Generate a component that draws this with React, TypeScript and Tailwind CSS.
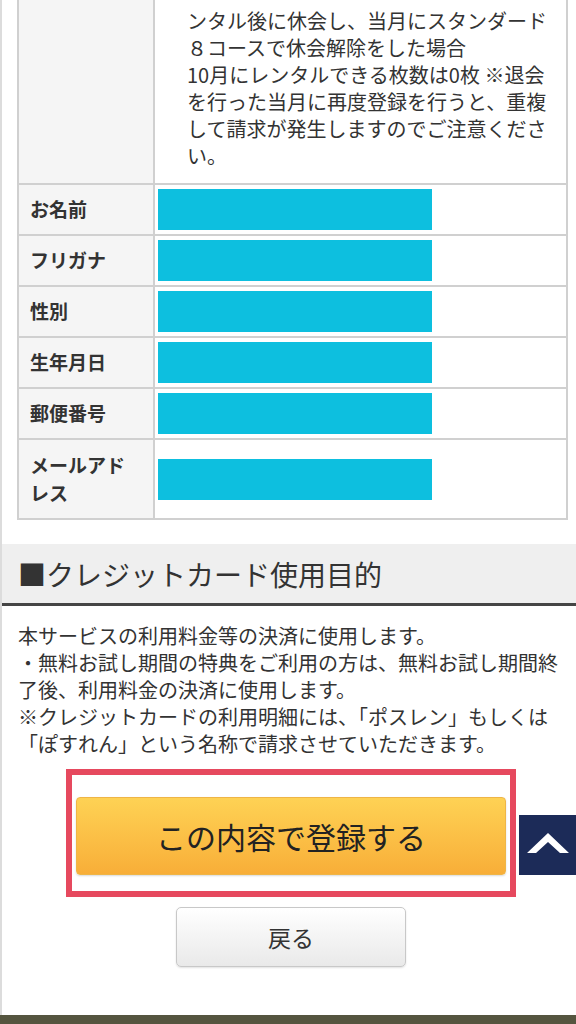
const rows = [
  { label: ["お名前"] },
  { label: ["フリガナ"] },
  { label: ["性別"] },
  { label: ["生年月日"] },
  { label: ["郵便番号"] },
  { label: ["メールアド", "レス"] },
];

const noteLines = [
  "ンタル後に休会し、当月にスタンダード",
  "８コースで休会解除をした場合",
  "10月にレンタルできる枚数は0枚 ※退会",
  "を行った当月に再度登録を行うと、重複",
  "して請求が発生しますのでご注意くださ",
  "い。",
];

const purposeLines = [
  "本サービスの利用料金等の決済に使用します。",
  "・無料お試し期間の特典をご利用の方は、無料お試し期間終",
  "了後、利用料金の決済に使用します。",
  "※クレジットカードの利用明細には、「ポスレン」もしくは",
  "「ぽすれん」という名称で請求させていただきます。",
];

const App = () => {
  return (
    <div className="w-[576px] h-[1024px] bg-white overflow-hidden flex flex-col text-[#333] font-['Noto_Sans_CJK_JP','Noto_Sans',sans-serif]">
      <div className="flex-1 border-l-2 border-[#dcdcdc] flex flex-col">
        {/* confirm table */}
        <div className="ml-[15px] w-[551px] border-x-2 border-b-2 border-[#d0d0d0]">
          <div className="flex border-b-2 border-[#d0d0d0]">
            <div className="w-[136px] shrink-0 bg-[#f5f5f5] border-r-2 border-[#d0d0d0]" />
            <div className="flex-1 pl-[32px] pt-[7px] pb-[14px] text-[20px] leading-[27px] whitespace-nowrap">
              {noteLines.map((line) => (
                <div key={line}>{line}</div>
              ))}
            </div>
          </div>

          {rows.map((row, i) => (
            <div
              key={row.label[0]}
              className={
                i === rows.length - 1
                  ? "flex"
                  : "flex border-b-2 border-[#d0d0d0]"
              }
            >
              <div
                className={
                  row.label.length > 1
                    ? "w-[136px] shrink-0 bg-[#f5f5f5] border-r-2 border-[#d0d0d0] pl-[11px] py-[11px] text-[19px] leading-[28px] font-bold whitespace-nowrap"
                    : "w-[136px] shrink-0 bg-[#f5f5f5] border-r-2 border-[#d0d0d0] pl-[11px] h-[49px] flex items-center text-[19px] font-bold whitespace-nowrap"
                }
              >
                <div>
                  {row.label.map((l) => (
                    <div key={l}>{l}</div>
                  ))}
                </div>
              </div>
              <div className="flex-1 flex items-center pl-[3px]">
                <div className="w-[274px] h-[41px] bg-[#0dbfdf]" />
              </div>
            </div>
          ))}
        </div>

        {/* section header */}
        <div className="mt-[24px] h-[62px] bg-[#efefef] border-b-[3px] border-[#454545] flex items-center pl-[16px] text-[28px] text-[#333]">
          ■クレジットカード使用目的
        </div>

        <div className="px-[16px] pt-[16px] text-[20px] leading-[27px] whitespace-nowrap">
          {purposeLines.map((line) => (
            <div key={line}>{line}</div>
          ))}
        </div>

        {/* buttons */}
        <div className="relative mt-[12px] flex flex-col items-center pl-[4px]">
          <div className="w-[450px] border-[6px] border-[#e6495e] pt-[22px] pb-[16px] px-[4px]">
            <button className="w-full h-[78px] rounded-[4px] border border-[#efb547] bg-gradient-to-b from-[#fed254] to-[#f8ae38] text-[30px] text-[#222] shadow-[0_1px_2px_rgba(0,0,0,0.15)]">
              この内容で登録する
            </button>
          </div>

          <button className="mt-[10px] w-[230px] h-[60px] rounded-[5px] border border-[#c8c8c8] bg-gradient-to-b from-white to-[#e9e9e9] text-[23px] text-[#333] shadow-[0_1px_2px_rgba(0,0,0,0.12)]">
            戻る
          </button>

          <div className="absolute right-0 top-[46px] w-[57px] h-[60px] bg-[#1c2b58] flex items-center justify-center">
            <svg width="57" height="60" viewBox="0 0 57 60">
              <polygon
                points="8,38 29,18 50,38 41,38 29,27 17,38"
                fill="#fff"
              />
            </svg>
          </div>
        </div>
      </div>
      <div className="h-[9px] bg-[#55553f]" />
    </div>
  );
};

export default App;
